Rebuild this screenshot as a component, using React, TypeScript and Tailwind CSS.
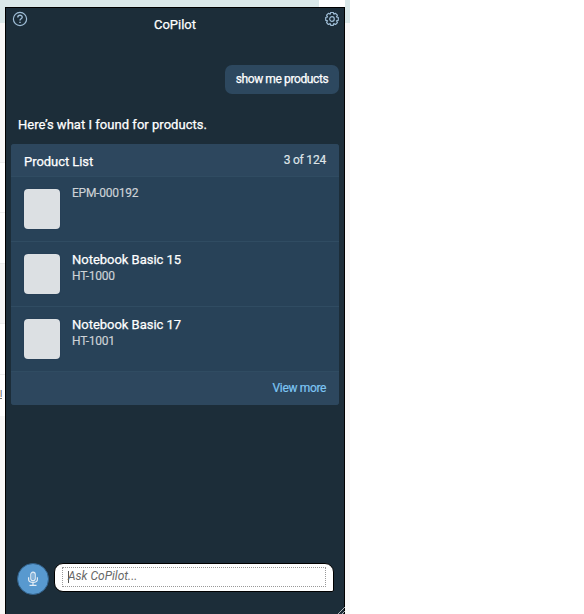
import type { ReactNode } from "react";

const products = [
  { name: "", code: "EPM-000192" },
  { name: "Notebook Basic 15", code: "HT-1000" },
  { name: "Notebook Basic 17", code: "HT-1001" },
];

function HelpIcon() {
  return (
    <svg width="16" height="16" viewBox="0 0 16 16" fill="none" stroke="#9fbdd6" className="block">
      <circle cx="8" cy="8" r="6.6" strokeWidth="1.2" />
      <path d="M5.8 6.4C5.8 3.6 10.2 3.7 10.2 6.2C10.2 7.8 8 7.8 8 9.5" strokeWidth="1.4" />
      <path d="M8 10.7V12" strokeWidth="1.4" />
    </svg>
  );
}

function GearIcon() {
  return (
    <svg width="16" height="16" viewBox="0 0 16 16" fill="none" stroke="#9fbdd6" strokeWidth="1.2" strokeLinejoin="round" className="block">
      <path d="M6.7 1.5h2.6l.5 1.7 1.7-.9 1.9 1.9-.9 1.7 1.8.6v2.8l-1.8.5.9 1.8-1.9 1.9-1.7-.9-.5 1.8H6.7l-.5-1.8-1.8.9-1.8-1.9.9-1.8-1.8-.5V6.5l1.8-.6-.9-1.7 1.8-1.9 1.8.9z" />
      <circle cx="8" cy="8" r="2.3" />
    </svg>
  );
}

function MicIcon() {
  return (
    <svg width="12" height="16" viewBox="0 0 12 16" fill="none" stroke="#e4edf5" className="block">
      <rect x="3.8" y="1.2" width="4.4" height="8.4" rx="2.2" strokeWidth="1.2" />
      <path d="M6 2v6.5" stroke="#b7cade" strokeWidth="1" />
      <path d="M1.6 6.3v1.9c0 4.3 8.8 4.3 8.8 0V6.3M6 11.4v2.8M2.5 14.3h7" strokeWidth="1.2" />
    </svg>
  );
}

function Line({ children, className }: { children: ReactNode; className: string }) {
  return <span className={`block whitespace-nowrap ${className}`}>{children}</span>;
}

export default function App() {
  return (
    <div className="flex h-[614px] w-[584px] overflow-hidden bg-white font-['Roboto','Liberation_Sans',sans-serif]">
      <div className="flex w-[5px] shrink-0 flex-col bg-white">
        <div className="h-[23px] bg-[#dae8e9]" />
        <div className="h-[140px] border-b border-[#ececec] bg-[#f7f7f7]" />
        <div className="h-[50px] border-b border-[#efefef]" />
        <div className="h-[50px]" />
        <div className="h-[61px] border-y border-[#ececec] bg-[#f5f5f5]" />
        <div className="h-[51px] border-b border-[#eee]" />
        <div className="h-[41px] pt-[14px]">
          <div className="h-[10px] w-[2px] border-b border-[#777] text-[9px] leading-[10px] text-[#555]">l</div>
        </div>
        <div className="flex-1 bg-[#f7f7f7]" />
      </div>
      <div className="flex w-[340px] shrink-0 flex-col">
        <div className="h-[7px] w-[314px] shrink-0 bg-[#dae8e9]" />
        <main className="relative flex flex-1 flex-col border-x border-t border-black bg-[#1c2d39]">
          <header className="flex h-[57px] shrink-0 items-start justify-between pl-[6px] pr-[4px] pt-[3px]">
            <HelpIcon />
            <Line className="mr-[2px] mt-[6px] text-[13px] leading-4 text-white [-webkit-text-stroke:0.25px_white]">CoPilot</Line>
            <GearIcon />
          </header>
          <div className="mr-[5px] flex h-[29px] w-[114px] shrink-0 items-center justify-center self-end rounded-[7px] bg-[#2d485f] pb-[2px] text-white">
            <Line className="text-[12px] leading-4 tracking-[-0.38px] [-webkit-text-stroke:0.25px_white]">show me products</Line>
          </div>
          <Line className="ml-[12px] mt-[23px] text-[13px] leading-4 tracking-[0.03px] text-white [-webkit-text-stroke:0.25px_white]">Here’s what I found for products.</Line>
          <section className="ml-[5px] mt-[11px] w-[328px] shrink-0 overflow-hidden rounded-[3px] bg-[#284258]">
            <div className="flex h-8 items-center justify-between bg-[#2d475e] pl-[13px] pr-[13px] pt-[3px]">
              <Line className="text-[13px] leading-4 tracking-[-0.05px] text-white [-webkit-text-stroke:0.25px_white]">Product List</Line>
              <Line className="-mt-[3px] text-[12px] leading-4 tracking-[-0.2px] text-[#dfe4e8] [-webkit-text-stroke:0.2px_#dfe4e8]">3 of 124</Line>
            </div>
            {products.map((product) => (
              <div key={product.code} className="flex h-[65px] gap-[12px] border-t border-[#304c62] pl-[13px] pt-[12px]">
                <div className="h-10 w-9 rounded-[4px] bg-[#dce0e3] shadow-[0_0_1px_#142a48]" />
                <div className={product.name ? "-mt-[2px]" : "-mt-[4px]"}>
                  {product.name && <Line className="text-[13px] leading-4 tracking-[-0.02px] text-white [-webkit-text-stroke:0.25px_white]">{product.name}</Line>}
                  <Line className="text-[12px] leading-[17px] tracking-[-0.25px] text-[#ced3d7] [-webkit-text-stroke:0.15px_#ced3d7]">{product.code}</Line>
                </div>
              </div>
            ))}
            <div className="flex h-[34px] items-center justify-end border-t border-[#304c62] bg-[#2d475e] pb-[2px] pr-[13px]">
              <a className="text-[12px] leading-4 tracking-[-0.35px] text-[#7dc5f3] [-webkit-text-stroke:0.2px_#7dc5f3]">View more</a>
            </div>
          </section>
          <div className="mt-auto mb-[19px] flex items-center gap-[5px] pl-[11px]">
            <div className="flex size-[32px] shrink-0 items-center justify-center rounded-full border border-[#315f87] bg-[#5899cf]">
              <MicIcon />
            </div>
            <div className="-mt-[4px] h-[29px] w-[280px] rounded-l-[9px] rounded-tr-[9px] rounded-br-[2px] border border-black bg-white px-[7px] pt-[3px]">
              <div className="flex h-5 items-center border border-dotted border-[#999] pl-[5px] text-[12px] italic text-[#686868]">
                <span className="-mr-px h-3 w-px bg-[#555]" />
                <span className="mb-[2px] leading-4">Ask CoPilot...</span>
              </div>
            </div>
          </div>
          <svg className="absolute -right-px bottom-0" width="7" height="7" viewBox="0 0 7 7" fill="none">
            <path d="M0 7L7 0M4 7L7 4" stroke="#aeb4b8" />
          </svg>
        </main>
      </div>
      <div className="w-[5px] bg-[#f8f8f8]">
        <div className="h-[23px] bg-[#dae8e9]" />
      </div>
    </div>
  );
}
